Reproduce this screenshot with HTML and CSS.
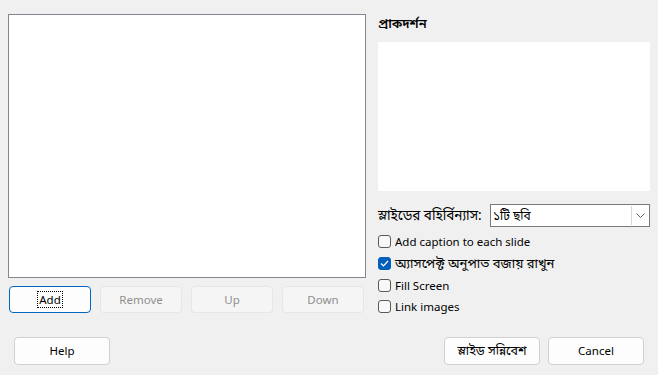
FILE: index.html
```html
<!DOCTYPE html>
<html lang="bn">
<head>
<meta charset="utf-8">
<link rel="stylesheet" href="styles.css">
</head>
<body>
<div class="dialog">
  <div class="top">
    <div class="left">
      <div class="listbox"></div>
      <div class="btnrow">
        <button class="btn small focus"><span class="focusring">Add</span></button>
        <button class="btn small disabled">Remove</button>
        <button class="btn small disabled">Up</button>
        <button class="btn small disabled">Down</button>
      </div>
    </div>
    <div class="right">
      <div class="preview-label">প্রাকদর্শন</div>
      <div class="preview"></div>
      <div class="layout-row">
        <span class="layout-label bn">স্লাইডের বহির্বিন্যাস:</span>
        <div class="combo">
          <span class="combo-value">১টি ছবি</span>
          <span class="combo-arrow">
            <svg width="9" height="5" viewBox="0 0 9 5"><path d="M0.5 0.5 L4.5 4.5 L8.5 0.5" fill="none" stroke="#606060" stroke-width="1"/></svg>
          </span>
        </div>
      </div>
      <div class="checks">
        <label class="check"><span class="box"></span>Add caption to each slide</label>
        <label class="check"><span class="box checked"><svg width="9" height="7" viewBox="0 0 9 7"><path d="M1 3.5 L3.5 6 L8 1" fill="none" stroke="#fff" stroke-width="1.2"/></svg></span><span class="bn">অ্যাসপেক্ট অনুপাত বজায় রাখুন</span></label>
        <label class="check"><span class="box"></span>Fill Screen</label>
        <label class="check"><span class="box"></span>Link images</label>
      </div>
    </div>
  </div>
  <div class="bottom">
    <button class="btn big help">Help</button>
    <div class="actions">
      <button class="btn big"><span class="bn-btn">স্লাইড সন্নিবেশ</span></button>
      <button class="btn big">Cancel</button>
    </div>
  </div>
</div>
</body>
</html>
```
FILE: styles.css
```css
html, body {
  margin: 0;
  padding: 0;
  background: #f0f0f0;
  width: 658px;
  height: 375px;
  overflow: hidden;
}
body {
  font-family: "Noto Sans", "Noto Sans Bengali", "Liberation Sans", sans-serif;
  font-size: 11.5px;
  color: #000;
}
.bn {
  font-size: 13px;
}
.layout-label.bn {
  font-size: 13.5px;
}
.bn-btn {
  font-size: 12.5px;
}
.dialog {
  padding: 14px 0 0 8px;
}
.top {
  display: flex;
}
.left {
  width: 358px;
}
.listbox {
  height: 262px;
  background: #fff;
  border: 1px solid #82868f;
}
.btnrow {
  display: flex;
  gap: 9px;
  padding-left: 1px;
  margin-top: 8px;
}
.btn {
  font: inherit;
  color: #000;
  background: #fdfdfd;
  border: 1px solid #d0d0d0;
  border-radius: 4px;
  padding: 0;
  display: flex;
  align-items: center;
  justify-content: center;
}
.btn.small {
  width: 82px;
  height: 27px;
}
.btn.big {
  width: 96px;
  height: 28px;
}
.btn.focus {
  border-color: #0067c0;
}
.focusring {
  outline: 1px dotted #000;
  padding: 0 1px;
  line-height: 15px;
}
.btn.disabled {
  background: #f5f5f5;
  border-color: #e6e6e6;
  color: #8f8f8f;
}
.right {
  margin-left: 12px;
  width: 272px;
}
.preview-label {
  height: 28px;
  line-height: 18px;
  font-size: 13px;
  font-weight: 600;
}
.preview {
  height: 149px;
  background: #fff;
}
.layout-row {
  display: flex;
  align-items: center;
  margin-top: 13px;
}
.layout-label {
  width: 112px;
}
.combo {
  width: 158px;
  height: 21px;
  border: 1px solid #7a7a7a;
  background: #fff;
  display: flex;
  align-items: center;
  font-size: 12px;
}
.combo-value {
  flex: 1;
  padding-left: 2px;
}
.combo-arrow {
  width: 17px;
  height: 19px;
  border-left: 1px solid #d6d6d6;
  display: flex;
  align-items: center;
  justify-content: center;
}
.checks {
  margin-top: 4px;
  display: flex;
  flex-direction: column;
}
.check {
  height: 21.7px;
  display: flex;
  align-items: center;
  gap: 4px;
}
.box {
  width: 11px;
  height: 11px;
  border: 1px solid #5a5a5a;
  border-radius: 3px;
  background: #f8f8f8;
  display: flex;
  align-items: center;
  justify-content: center;
}
.box.checked {
  background: #005fb8;
  border-color: #005fb8;
}
.bottom {
  display: flex;
  justify-content: space-between;
  margin-top: 19px;
  padding-right: 14px;
}
.help {
  margin-left: 6px;
}
.actions {
  display: flex;
  gap: 8px;
}
```
